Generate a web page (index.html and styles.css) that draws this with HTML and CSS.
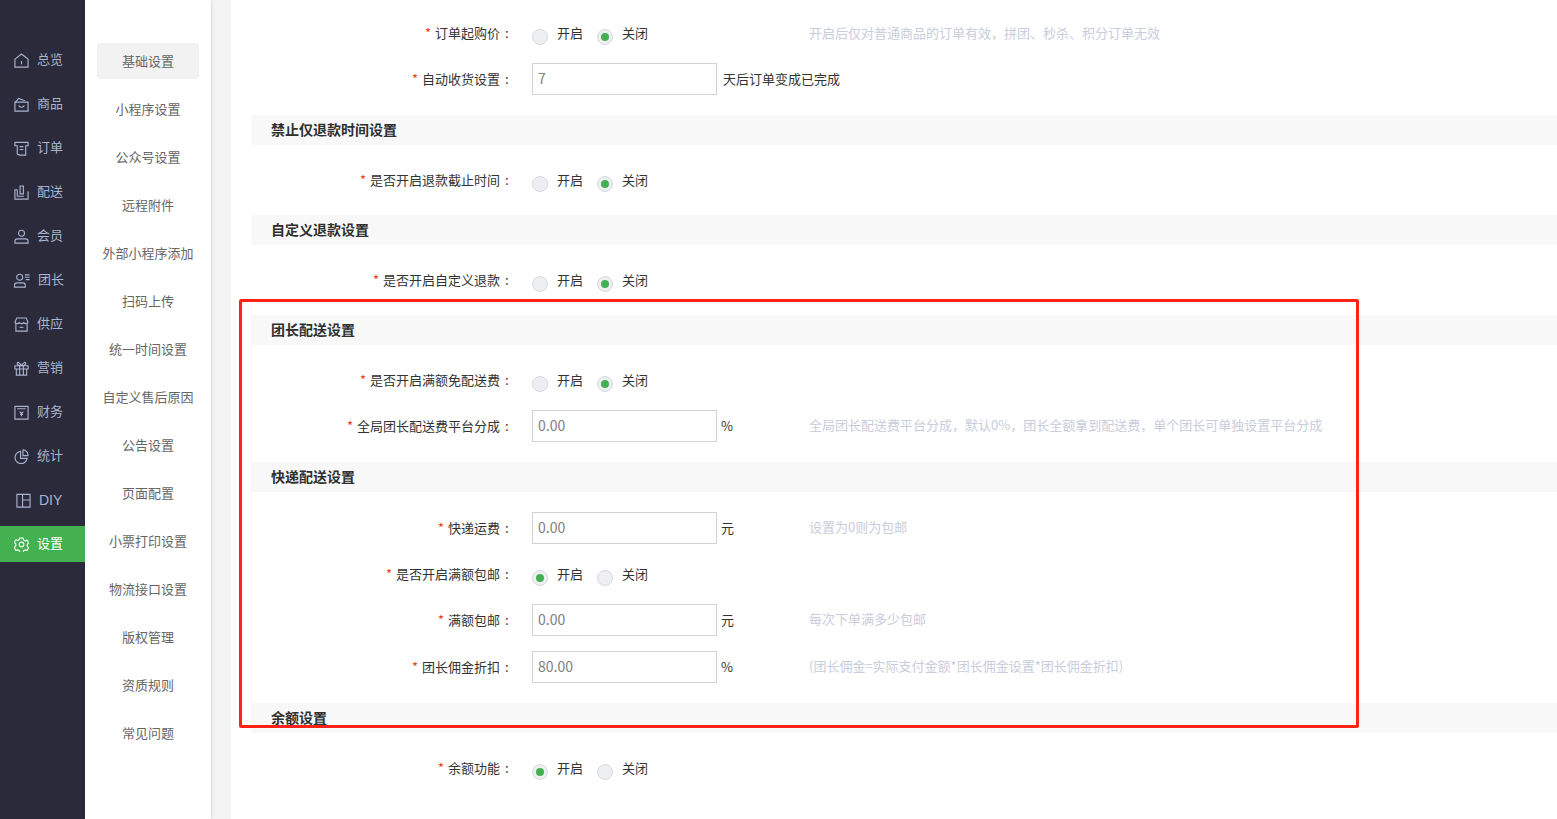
FILE: index.html
```html
<!DOCTYPE html>
<html lang="zh-CN">
<head>
<meta charset="utf-8">
<title>基础设置</title>
<link rel="stylesheet" href="styles.css">
</head>
<body>
<div class="app">
  <nav class="rail">
    <a class="rail-item"><svg class="ico" viewBox="0 0 16 16"><path d="M1 6.500 8 1l7 5.500V15H1z"/><path d="M8 8.500v3.500"/></svg><span>总览</span></a>
    <a class="rail-item"><svg class="ico" viewBox="0 0 16 16"><path d="M1 5.500h14V15H1z"/><path d="M1.500 5.500 5 1.500 11.500 4"/><path d="M5 9c1 2.500 5 2.500 6 0"/></svg><span>商品</span></a>
    <a class="rail-item"><svg class="ico" viewBox="0 0 16 16"><path d="M1 1.500h14v3.500h-2.500V15H6l-2.500-1V5H1z"/><path d="M6 6h4M6 9h4"/></svg><span>订单</span></a>
    <a class="rail-item"><svg class="ico" viewBox="0 0 16 16"><path d="M3.500 5H1v10h14V7.500h-1"/><path d="M6.500 1h3.500v8.500H6.500z"/><path d="M3.500 5v7h7"/></svg><span>配送</span></a>
    <a class="rail-item"><svg class="ico" viewBox="0 0 16 16"><circle cx="8" cy="4.500" r="3.200"/><path d="M1 15v-2c0-1.500 1-2.500 2.500-2.500h9c1.500 0 2.500 1 2.500 2.500v2z"/></svg><span>会员</span></a>
    <a class="rail-item item-wide"><svg class="ico ico-wide" viewBox="0 0 18 16"><circle cx="6.500" cy="4.500" r="3.200"/><path d="M1 15v-2c0-1.500 1-2.500 2.500-2.500h6.500c1.500 0 2.500 1 2.500 2.500v2z"/><path d="M12 2h5M12 4.500h5M13 7h4"/></svg><span>团长</span></a>
    <a class="rail-item"><svg class="ico" viewBox="0 0 16 16"><path d="M2 6.500V15h12V6.500"/><path d="M3 1h10l2 4.500c-1 2-3.500 2-4.500 .5-1 1.500-4 1.500-5 0-1 1.500-3.500 1.500-4.500-.5z"/><path d="M6 11h4"/></svg><span>供应</span></a>
    <a class="rail-item"><svg class="ico" viewBox="0 0 16 16"><path d="M1 5h14v3.500H1zM2.500 8.500V15h11V8.500M6 5v10M10 5v10"/><path d="M8 5C6 1 3 .5 3.500 3 4 5 8 5 8 5c2-4 5-4.500 4.500-2C12 5 8 5 8 5z"/></svg><span>营销</span></a>
    <a class="rail-item"><svg class="ico" viewBox="0 0 16 16"><path d="M1 1.500h14V15H1zM3.500 4h9"/><path d="M6 7l2 2 2-2M8 9v3M6.500 10h3"/></svg><span>财务</span></a>
    <a class="rail-item"><svg class="ico" viewBox="0 0 16 16"><path d="M7 2.500a6.500 6.500 0 1 0 7 7.500H7z"/><path d="M9.500 1a5.500 5.500 0 0 1 5.500 6H9.500z"/></svg><span>统计</span></a>
    <a class="rail-item item-diy"><svg class="ico" viewBox="0 0 16 16"><path d="M1 1.500h14V15H1zM7 1.500V15M7 7.500h8"/></svg><span>DIY</span></a>
    <a class="rail-item active"><svg class="ico" viewBox="0 0 16 16"><path d="M6.300 .8h3.400l.5 2.100 1.700 1 2.100-.6 1.700 2.900-1.600 1.500v2l1.600 1.500-1.700 2.900-2.100-.6-1.700 1-.5 2.100H6.300l-.5-2.100-1.700-1-2.100.6L.3 10.700 1.900 9.200v-2L.3 5.700 2 2.800l2.100.6 1.700-1z" transform="translate(0 .2)"/><circle cx="8" cy="8" r="2.500"/></svg><span>设置</span></a>
  </nav>

  <aside class="submenu">
    <a class="sub-item current">基础设置</a>
    <a class="sub-item">小程序设置</a>
    <a class="sub-item">公众号设置</a>
    <a class="sub-item">远程附件</a>
    <a class="sub-item">外部小程序添加</a>
    <a class="sub-item">扫码上传</a>
    <a class="sub-item">统一时间设置</a>
    <a class="sub-item">自定义售后原因</a>
    <a class="sub-item">公告设置</a>
    <a class="sub-item">页面配置</a>
    <a class="sub-item">小票打印设置</a>
    <a class="sub-item">物流接口设置</a>
    <a class="sub-item">版权管理</a>
    <a class="sub-item">资质规则</a>
    <a class="sub-item">常见问题</a>
  </aside>

  <div class="gutter"></div>

  <main class="content">
    <div class="row row-radio">
      <label class="row-label"><i>*</i>订单起购价<b>:</b></label>
      <div class="control">
        <span class="opt"><span class="radio"></span>开启</span>
        <span class="opt"><span class="radio on"></span>关闭</span>
      </div>
      <span class="hint">开启后仅对普通商品的订单有效，拼团、秒杀、积分订单无效</span>
    </div>
    <div class="row">
      <label class="row-label"><i>*</i>自动收货设置<b>:</b></label>
      <div class="control"><span class="input">7</span><span class="unit unit-text">天后订单变成已完成</span></div>
    </div>

    <h3 class="section">禁止仅退款时间设置</h3>
    <div class="row row-radio">
      <label class="row-label"><i>*</i>是否开启退款截止时间<b>:</b></label>
      <div class="control">
        <span class="opt"><span class="radio"></span>开启</span>
        <span class="opt"><span class="radio on"></span>关闭</span>
      </div>
    </div>

    <h3 class="section">自定义退款设置</h3>
    <div class="row row-radio">
      <label class="row-label"><i>*</i>是否开启自定义退款<b>:</b></label>
      <div class="control">
        <span class="opt"><span class="radio"></span>开启</span>
        <span class="opt"><span class="radio on"></span>关闭</span>
      </div>
    </div>

    <h3 class="section">团长配送设置</h3>
    <div class="row row-radio">
      <label class="row-label"><i>*</i>是否开启满额免配送费<b>:</b></label>
      <div class="control">
        <span class="opt"><span class="radio"></span>开启</span>
        <span class="opt"><span class="radio on"></span>关闭</span>
      </div>
    </div>
    <div class="row">
      <label class="row-label"><i>*</i>全局团长配送费平台分成<b>:</b></label>
      <div class="control"><span class="input">0.00</span><span class="unit">%</span></div>
      <span class="hint">全局团长配送费平台分成，默认0%，团长全额拿到配送费，单个团长可单独设置平台分成</span>
    </div>

    <h3 class="section">快递配送设置</h3>
    <div class="row">
      <label class="row-label"><i>*</i>快递运费<b>:</b></label>
      <div class="control"><span class="input">0.00</span><span class="unit">元</span></div>
      <span class="hint">设置为0则为包邮</span>
    </div>
    <div class="row row-radio">
      <label class="row-label"><i>*</i>是否开启满额包邮<b>:</b></label>
      <div class="control">
        <span class="opt"><span class="radio on"></span>开启</span>
        <span class="opt"><span class="radio"></span>关闭</span>
      </div>
    </div>
    <div class="row">
      <label class="row-label"><i>*</i>满额包邮<b>:</b></label>
      <div class="control"><span class="input">0.00</span><span class="unit">元</span></div>
      <span class="hint">每次下单满多少包邮</span>
    </div>
    <div class="row">
      <label class="row-label"><i>*</i>团长佣金折扣<b>:</b></label>
      <div class="control"><span class="input">80.00</span><span class="unit">%</span></div>
      <span class="hint">(团长佣金=实际支付金额*团长佣金设置*团长佣金折扣)</span>
    </div>

    <h3 class="section">余额设置</h3>
    <div class="row row-radio">
      <label class="row-label"><i>*</i>余额功能<b>:</b></label>
      <div class="control">
        <span class="opt"><span class="radio on"></span>开启</span>
        <span class="opt"><span class="radio"></span>关闭</span>
      </div>
    </div>
  </main>
</div>
<div class="annotation"></div>
</body>
</html>
```

FILE: styles.css
```css
* { box-sizing: border-box; }
html, body {
  margin: 0;
  height: 100%;
  overflow: hidden;
  background: #fff;
  font-family: "Noto Sans CJK SC", "Liberation Sans", sans-serif;
  font-size: 13px;
}
.app { display: flex; height: 819px; }

/* dark icon rail */
.rail {
  width: 85px;
  flex: none;
  background: #2a2a3b;
  padding-top: 42px;
}
.rail-item {
  display: flex;
  align-items: center;
  height: 36px;
  margin-bottom: 8px;
  padding-left: 14px;
  color: #a9b4cf;
  line-height: 34px;
}
.rail-item span { margin-top: -2px; }
.ico {
  width: 15px;
  height: 15px;
  flex: none;
  margin: 0 8px 0 0;
  fill: none;
  stroke: currentColor;
  stroke-width: 1.2;
}
.item-wide { padding-left: 13px; }
.ico-wide { width: 18px; margin-right: 7px; }
.item-diy { padding-left: 16px; }
.item-diy span { font-family: "Liberation Sans", sans-serif; font-size: 14px; margin-top: 0; }
.rail-item.active { background: #43b14f; color: #fff; }

/* settings sub menu */
.submenu {
  width: 126px;
  flex: none;
  padding: 43px 12px 0;
  background: #fff;
  box-shadow: 1px 0 3px rgba(0, 0, 0, .1);
  position: relative;
}
.sub-item {
  display: block;
  height: 36px;
  margin-bottom: 12px;
  padding-top: 1px;
  line-height: 34px;
  text-align: center;
  white-space: nowrap;
  color: #666;
  border-radius: 3px;
}
.sub-item.current { background: #f2f2f2; }

.gutter { width: 20px; flex: none; background: #f4f4f4; }

/* form */
.content {
  flex: 1;
  min-width: 0;
  padding: 18px 0 0 20px;
  overflow: hidden;
}
.section {
  height: 30px;
  margin: 20px 0;
  padding-left: 20px;
  background: #f8f8f8;
  font-size: 14px;
  font-weight: 700;
  line-height: 28px;
  color: #2f2f2f;
}
.row {
  display: flex;
  height: 32px;
  margin-bottom: 15px;
  line-height: 31px;
  color: #333;
}
.row-radio { height: 30px; line-height: 30px; }
.row-label {
  width: 262px;
  flex: none;
  margin-right: 19px;
  text-align: right;
  white-space: nowrap;
}
.row-label i {
  margin-right: 4px;
  font-style: normal;
  color: #ed4014;
}
.row-label b {
  display: inline-block;
  width: 13px;
  padding-left: 5px;
  font-weight: 400;
  text-align: left;
}
.control {
  display: flex;
  width: 277px;
  flex: none;
}
.opt {
  display: flex;
  margin-right: 14px;
  white-space: nowrap;
}
.radio {
  position: relative;
  width: 16px;
  height: 16px;
  margin: 11px 9px 0 0;
  border: 1px solid #d5d8e0;
  border-radius: 50%;
  background: #eeeff3;
}
.radio.on::after {
  content: "";
  position: absolute;
  left: 3px;
  top: 3px;
  width: 8px;
  height: 8px;
  border-radius: 50%;
  background: #43b14f;
}
.input {
  width: 185px;
  height: 32px;
  flex: none;
  padding-left: 5px;
  border: 1px solid #d3d3d3;
  font-size: 14px;
  line-height: 28px;
  color: #808080;
}
.unit { margin-left: 4px; white-space: nowrap; }
.unit-text { margin-left: 6px; }
.hint { color: #c8cddb; white-space: nowrap; line-height: 30px; }

/* red hand-drawn marker lying over the form */
.annotation {
  position: absolute;
  left: 239px;
  top: 299px;
  width: 1120px;
  height: 429px;
  border: 3px solid #ff2316;
  border-radius: 2px;
}
```
